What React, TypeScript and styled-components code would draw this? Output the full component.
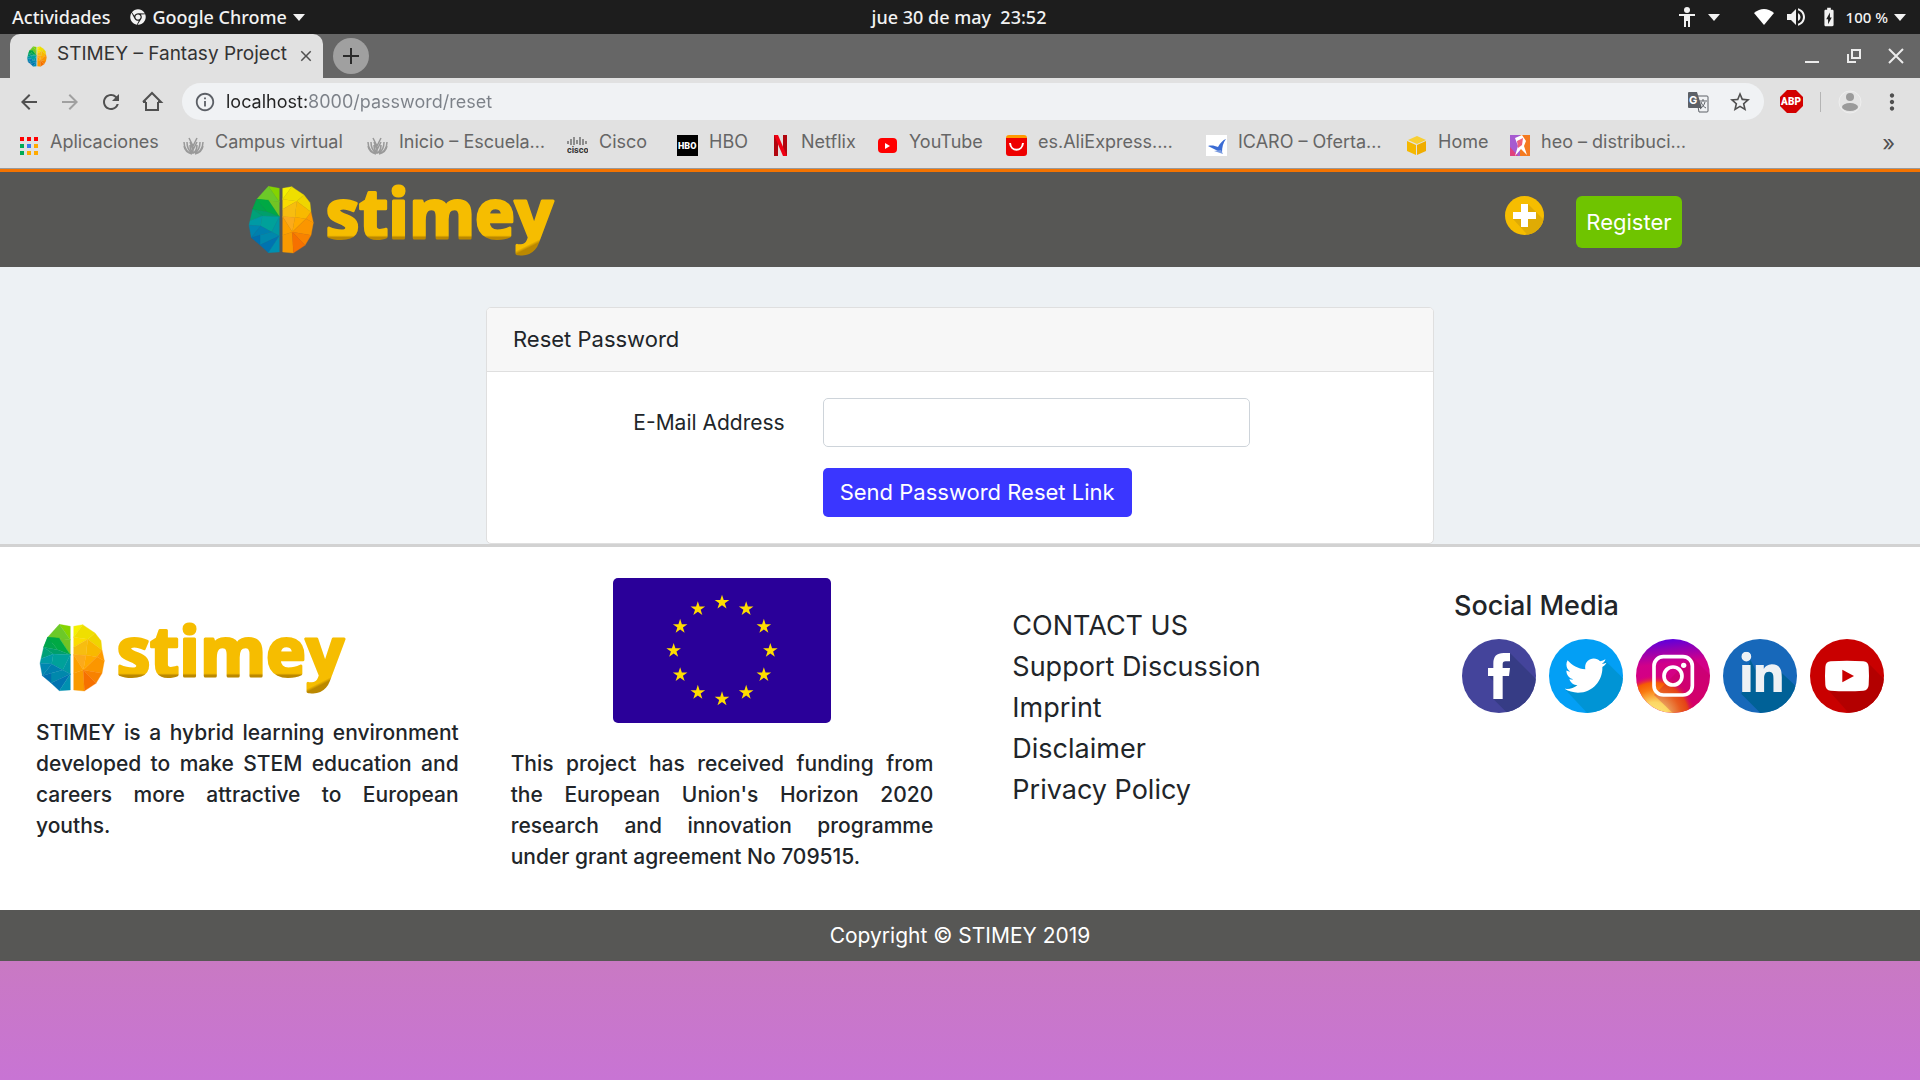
import React from "react";
import styled, { createGlobalStyle } from "styled-components";
import {
  MdArrowBack,
  MdArrowForward,
  MdRefresh,
  MdInfoOutline,
  MdStarBorder,
  MdMoreVert,
  MdVolumeUp,
  MdBatteryChargingFull,
  MdClose,
} from "react-icons/md";
import { FaChrome, FaTwitter, FaLinkedinIn } from "react-icons/fa";

const GlobalStyle = createGlobalStyle`
  *, *::before, *::after { box-sizing: border-box; }
  body {
    margin: 0;
    background: #c874d4;
    color: #212529;
    font-family: Inter, "Open Sans", sans-serif;
    font-size: 22px;
    line-height: 31px;
  }
  a { color: inherit; text-decoration: none; }
  button, input { font: inherit; }
  button { cursor: pointer; }
  svg { display: block; flex: none; }
`;

const Screen = styled.div`
  display: flex;
  flex-direction: column;
  min-height: 100vh;
`;

/* ---------- Desktop bar ---------- */

const DesktopBar = styled.div`
  display: grid;
  grid-template-columns: 1fr auto 1fr;
  align-items: center;
  height: 34px;
  padding: 0 14px 0 12px;
  background: #1d1d1d;
  color: #f2f2f2;
  font: 500 18px/24px "Noto Sans", sans-serif;
`;

const DesktopGroup = styled.div<{ $end?: boolean }>`
  display: flex;
  align-items: center;
  justify-content: ${(p) => (p.$end ? "flex-end" : "flex-start")};
  gap: ${(p) => (p.$end ? "10px" : "20px")};
`;

const DesktopButton = styled.button`
  display: flex;
  align-items: center;
  gap: 6px;
  padding: 0;
  border: 0;
  background: none;
  color: inherit;
`;

const Clock = styled.time`
  white-space: pre;
`;

const Battery = styled.span`
  font-size: 15px;
`;

const Caret = styled.span`
  border: 6px solid transparent;
  border-top: 7px solid currentColor;
  border-bottom: 0;
`;

const AccessGroup = styled(DesktopButton)`
  gap: 12px;
  margin-right: 24px;
`;

/* ---------- Browser window ---------- */

const TabStrip = styled.div`
  display: flex;
  align-items: center;
  height: 44px;
  padding: 0 16px 0 10px;
  background: #666;
`;

const Tab = styled.div`
  display: flex;
  align-items: center;
  align-self: stretch;
  gap: 10px;
  width: 313px;
  padding: 0 12px 0 17px;
  border-radius: 10px 10px 0 0;
  background: #e1e1e1;
`;

const TabTitle = styled.span`
  flex: 1;
  padding-bottom: 4px;
  color: #333;
  font: 19px/24px Inter, sans-serif;
  white-space: nowrap;
`;

const IconButton = styled.button<{ $muted?: boolean }>`
  display: grid;
  place-items: center;
  padding: 0;
  border: 0;
  background: none;
  color: ${(p) => (p.$muted ? "#a0a0a0" : "#505050")};
`;

const NewTab = styled(IconButton)`
  width: 36px;
  height: 36px;
  margin-left: 10px;
  border-radius: 50%;
  background: #a0a0a0;
  color: #2a2a2a;
`;

const WindowControls = styled.div`
  display: flex;
  gap: 26px;
  margin-left: auto;
  button { color: #ececec; }
`;

const Toolbar = styled.div`
  display: flex;
  align-items: center;
  height: 47px;
  padding: 0 15px 0 17px;
  background: #e1e1e1;
`;

const NavButtons = styled.div`
  display: flex;
  gap: 17px;
  margin-right: 18px;
`;

const Omnibox = styled.label`
  display: flex;
  flex: 1;
  align-items: center;
  gap: 10px;
  height: 37px;
  padding: 0 12px;
  border-radius: 19px;
  background: #f0f2f4;
  color: #5c6066;
`;

const UrlInput = styled.input`
  flex: 1;
  min-width: 0;
  padding: 0;
  border: 0;
  outline: 0;
  background: linear-gradient(to right, #222 82px, #7c8188 82px);
  background-clip: text;
  -webkit-text-fill-color: transparent;
  color: #5c6066;
  font: 18px/24px Inter, sans-serif;
`;

const OmniActions = styled.div`
  display: flex;
  gap: 18px;
`;

const ToolbarActions = styled.div`
  display: flex;
  align-items: center;
  gap: 17px;
  margin-left: 16px;
`;

const Divider = styled.span`
  width: 1px;
  height: 20px;
  background: #b4b4b4;
`;

const Bookmarks = styled.nav`
  display: flex;
  align-items: center;
  height: 44px;
  padding: 0 25px 10px 18px;
  border-bottom: 1px solid #999;
  background: #e1e1e1;
`;

const Bookmark = styled.a<{ $width: number }>`
  display: flex;
  align-items: center;
  gap: 11px;
  width: ${(p) => p.$width}px;
  color: #666;
  font: 18px/24px Inter, sans-serif;
  white-space: nowrap;
  svg { margin-top: 7px; }
`;

const More = styled(IconButton)`
  margin-left: auto;
  padding-top: 4px;
`;

/* ---------- Site ---------- */

const SiteHeader = styled.header`
  border-top: 3px solid #f47300;
  background: #575755;
`;

const HeaderInner = styled.div`
  display: flex;
  align-items: center;
  justify-content: space-between;
  max-width: 1443px;
  height: 95px;
  margin: 0 auto;
  padding-left: 10px;
`;

const HeaderActions = styled.div`
  display: flex;
  align-items: flex-start;
  align-self: stretch;
  gap: 32px;
  padding-top: 24px;
`;

const Register = styled.a`
  padding: 10px;
  border-radius: 6px;
  background: #6fc400;
  color: #fff;
  line-height: 32px;
`;

const Main = styled.main`
  padding-top: 40px;
  background: #edf1f4;
`;

const Card = styled.section`
  max-width: 948px;
  margin: 0 auto;
  overflow: hidden;
  border: 1px solid #dfdfdf;
  border-radius: 5px;
  background: #fff;
`;

const CardTitle = styled.h1`
  margin: 0;
  padding: 16px 26px;
  border-bottom: 1px solid #dfdfdf;
  background: #f7f7f7;
  font-size: 22px;
  font-weight: 400;
  line-height: 31px;
`;

const ResetForm = styled.form`
  display: grid;
  grid-template-columns: 272fr 428fr 119fr;
  gap: 21px 38px;
  align-items: center;
  padding: 26px;
`;

const FieldLabel = styled.label`
  font-size: 21px;
  text-align: right;
`;

const EmailInput = styled.input`
  width: 100%;
  height: 49px;
  padding: 8px 15px;
  border: 1px solid #ced4da;
  border-radius: 5px;
  background: #fff;
`;

const SubmitButton = styled.button`
  grid-column: 2;
  justify-self: start;
  height: 49px;
  padding: 0 17px;
  border: 0;
  border-radius: 5px;
  background: #3a36ff;
  color: #fff;
`;

const Footer = styled.footer`
  display: grid;
  grid-template-columns: 423fr 423fr 417fr 429fr;
  gap: 52px;
  padding: 31px 36px 38px;
  border-top: 3px solid #d2d2d2;
  background: #fff;
`;

const Column = styled.div<{ $top: number; $left?: number }>`
  padding-top: ${(p) => p.$top}px;
  padding-left: ${(p) => p.$left ?? 0}px;
`;

const LogoLink = styled.a`
  display: block;
  padding-left: 4px;
`;

const Blurb = styled.p`
  margin: 25px 0 0;
  font-size: 21px;
  font-weight: 500;
  line-height: 31px;
  text-align: justify;
`;

const FlagBox = styled.div`
  display: flex;
  justify-content: center;
`;

const Links = styled.ul`
  margin: 0;
  padding: 0;
  list-style: none;
  font-size: 27px;
  line-height: 41px;
`;

const SocialTitle = styled.h2`
  margin: 0 0 17px;
  font-size: 27px;
  font-weight: 500;
  line-height: 32px;
`;

const SocialRow = styled.div`
  display: flex;
  gap: 13px;
  padding-left: 8px;
`;

const Copyright = styled.div`
  padding: 10px;
  background: #575755;
  color: #fff;
  font-size: 21px;
  text-align: center;
`;

const Backdrop = styled.div`
  flex: 1;
  background: linear-gradient(#c979c3, #c874d4);
`;

/* ---------- Drawings ---------- */

const facets: [string, string][] = [
  ["115,61 148,67 148,108", "#84d400"],
  ["115,61 148,108 80,100", "#6cc928"],
  ["80,100 115,103 68,130", "#00a63c"],
  ["115,103 148,108 148,152", "#72c424"],
  ["80,100 115,103 148,152 110,137", "#00a944"],
  ["80,100 110,137 68,130", "#00a54c"],
  ["68,130 110,137 148,152 97,150", "#009f6b"],
  ["68,130 97,150 60,164", "#00a078"],
  ["60,164 97,150 92,180 57,178", "#009aa5"],
  ["97,150 148,152 125,198 92,180", "#00a19a"],
  ["148,152 148,210 125,198", "#0097a2"],
  ["57,178 92,180 64,215", "#0086b0"],
  ["92,180 125,198 90,208 64,215", "#007fae"],
  ["125,198 148,210 90,237 90,208", "#0088ac"],
  ["64,215 90,208 90,237", "#006fae"],
  ["90,237 148,210 115,260", "#0073b0"],
  ["148,210 148,258 115,260", "#0090b0"],
  ["158,67 185,62 158,100", "#f5f100"],
  ["185,62 222,87 200,106 158,100", "#efdf00"],
  ["222,87 240,110 243,138 200,106", "#efd500"],
  ["158,100 200,106 158,130", "#fbdc00"],
  ["200,106 243,138 228,158 195,154", "#f8b900"],
  ["158,130 200,106 195,154 158,152", "#f7bd10"],
  ["158,152 195,154 187,198", "#fbaa1c"],
  ["195,154 228,158 187,198", "#ffaa00"],
  ["228,158 243,138 250,170", "#ff9a00"],
  ["228,158 250,170 243,208 187,198", "#fb9600"],
  ["158,152 187,198 158,208", "#fca000"],
  ["187,198 243,208 225,238", "#f88200"],
  ["158,208 187,198 190,261 158,258", "#f99a00"],
  ["187,198 225,238 190,261", "#f67000"],
];

const Facets = () => (
  <>
    {facets.map(([points, fill]) => (
      <polygon key={points} points={points} fill={fill} stroke={fill} strokeWidth="1" />
    ))}
  </>
);

const Brain = () => (
  <svg width="20" height="21" viewBox="54 58 200 206" aria-hidden="true">
    <Facets />
  </svg>
);

const Wordmark = styled.svg`
  overflow: visible;
`;

const Logo = ({ id }: { id: string }) => (
  <Wordmark width="306" height="68" viewBox="57 60 918 204" role="img" aria-label="stimey">
    <defs>
      <linearGradient id={`${id}-a`} gradientUnits="userSpaceOnUse" x1="0" y1="208" x2="0" y2="214">
        <stop offset="0" stopColor="#f6bd00" />
        <stop offset="1" stopColor="#bb8800" />
      </linearGradient>
      <linearGradient id={`${id}-b`} gradientUnits="userSpaceOnUse" x1="895" y1="236" x2="899" y2="244">
        <stop offset="0" stopColor="#f6bd00" />
        <stop offset="1" stopColor="#bb8800" />
      </linearGradient>
    </defs>
    <Facets />
    <text
      x="287"
      y="216"
      fontFamily="'Open Sans', sans-serif"
      fontWeight="700"
      fontSize="202"
      strokeWidth="9"
      strokeLinejoin="round"
    >
      <tspan fill={`url(#${id}-a)`} stroke={`url(#${id}-a)`}>stime</tspan>
      <tspan fill={`url(#${id}-b)`} stroke={`url(#${id}-b)`}>y</tspan>
    </text>
  </Wordmark>
);

const PlusBadge = () => (
  <svg width="39" height="39" viewBox="0 0 117 117" aria-hidden="true">
    <clipPath id="plus-clip"><circle cx="58.500" cy="58.500" r="58.500" /></clipPath>
    <g clipPath="url(#plus-clip)">
      <rect width="117" height="117" fill="#f6bd00" />
      <path d="M69 24L130 85V130H80L24 69Z" fill="#dfab05" />
    </g>
    <path d="M48 24h21v24h24v21H69v24H48V69H24V48h24z" fill="#fff" />
  </svg>
);

const starPoints = (cx: number, cy: number, r: number) =>
  Array.from({ length: 10 }, (_, i) => {
    const a = (Math.PI / 5) * i - Math.PI / 2;
    const d = i % 2 ? r * 0.382 : r;
    return `${(cx + d * Math.cos(a)).toFixed(1)},${(cy + d * Math.sin(a)).toFixed(1)}`;
  }).join(" ");

const EuFlag = () => (
  <svg width="218" height="145" viewBox="0 0 654 435" role="img" aria-label="European Union">
    <rect width="654" height="435" rx="15" fill="#2a0099" />
    {Array.from({ length: 12 }, (_, i) => {
      const a = (Math.PI / 6) * i;
      return (
        <polygon key={i} points={starPoints(327 + 145 * Math.sin(a), 218 - 145 * Math.cos(a), 23)} fill="#fd0" />
      );
    })}
  </svg>
);

type DiscProps = { id: string; bg: string; shade?: string; shadow: string; children: React.ReactNode };

const Disc = ({ id, bg, shade, shadow, children }: DiscProps) => (
  <svg width="74" height="74" viewBox="0 0 222 222" aria-hidden="true">
    <clipPath id={id}><circle cx="111" cy="111" r="111" /></clipPath>
    <g clipPath={`url(#${id})`}>
      <rect width="222" height="222" fill={bg} />
      <path d={shadow} fill={shade} />
    </g>
    {children}
  </svg>
);

const Facebook = () => (
  <Disc id="fb" bg="#44449b" shade="#363c85" shadow="M144 42L260 158V260H174L94 180V126L78 110Z">
    <path
      fill="#fff"
      d="M94 180V111H78V87H94V74C94 52 104 42 125 42H144V67H131C124 67 122 70 122 76V87H144L141 111H122V180Z"
    />
  </Disc>
);

const Twitter = () => (
  <Disc id="tw" bg="#039ff5" shade="#0094d5" shadow="M170 66L260 156V260H150L50 153Z">
    <FaTwitter x={47} y={47} size={126} color="#fff" />
  </Disc>
);

const Instagram = () => (
  <svg width="74" height="74" viewBox="0 0 222 222" aria-hidden="true">
    <defs>
      <linearGradient id="ig-base" x1="0.400" y1="0" x2="0.500" y2="1">
        <stop offset="0" stopColor="#5b00df" />
        <stop offset="0.140" stopColor="#9100b5" />
        <stop offset="0.330" stopColor="#d1008a" />
        <stop offset="1" stopColor="#e0006f" />
      </linearGradient>
      <radialGradient id="ig-glow" cx="0.250" cy="1.050" r="0.560">
        <stop offset="0" stopColor="#ffe87a" />
        <stop offset="0.350" stopColor="#fcd765" />
        <stop offset="0.650" stopColor="#fa7a10" />
        <stop offset="0.820" stopColor="#f55a05" />
        <stop offset="1" stopColor="#e0006f" stopOpacity="0" />
      </radialGradient>
      <clipPath id="ig"><circle cx="111" cy="111" r="111" /></clipPath>
    </defs>
    <g clipPath="url(#ig)">
      <rect width="222" height="222" fill="url(#ig-base)" />
      <rect width="222" height="222" fill="url(#ig-glow)" />
      <path d="M168 54L260 146V260H150L54 168Z" fill="#b4004a" opacity="0.250" />
    </g>
    <g fill="none" stroke="#fff">
      <rect x="54" y="53" width="115" height="115" rx="28" strokeWidth="11" />
      <circle cx="111" cy="111" r="27" strokeWidth="11" />
    </g>
    <circle cx="143" cy="79" r="8" fill="#fff" />
  </svg>
);

const LinkedIn = () => (
  <Disc id="li" bg="#1768ba" shade="#006197" shadow="M82 62L97 92H166L260 180V260H150L55 165Z">
    <FaLinkedinIn x={47} y={38} size={138} color="#eef1f4" />
  </Disc>
);

const YouTube = () => (
  <Disc id="yt" bg="#c90000" shade="#b30000" shadow="M172 70L260 158V260H150L52 150Z">
    <path
      fill="#fff"
      d="M62 67Q111 64 160 67Q175 68 176 84Q178 111 176 138Q175 154 160 155Q111 158 62 155Q47 154 46 138Q44 111 46 84Q47 68 62 67Z"
    />
    <path d="M97 92L132 111L97 130Z" fill="#c90000" />
  </Disc>
);

const AppsIcon = () => {
  const colors = ["#f00", "#f00", "#f00", "#0a5", "#3b78f0", "#fa0", "#0a5", "#fa0", "#fa0"];
  return (
    <svg width="21" height="21" viewBox="0 0 21 21" aria-hidden="true">
      {colors.map((c, i) => (
        <rect key={i} x={2 + (i % 3) * 7} y={2 + Math.floor(i / 3) * 7} width="4" height="4" fill={c} />
      ))}
    </svg>
  );
};

const LotusIcon = () => (
  <svg width="21" height="21" viewBox="0 0 21 21" fill="none" stroke="#999" strokeWidth="1.500" aria-hidden="true">
    <path d="M6 3l4 8 4-8M7 7l3 8 4-8M1 7c0 7 4 11 8 12M20 7c0 7-4 11-8 12M1 11c1 5 4 7 8 8M20 11c-1 5-4 7-8 8M4 7c0 5 2 9 5 11M17 7c0 5-2 9-5 11M7 10c0 4 1 6 3 8M14 10c0 4-1 6-3 8M10 12v7" />
  </svg>
);

const CiscoIcon = () => (
  <svg width="21" height="21" viewBox="0 0 21 21" aria-hidden="true">
    <path
      d="M1 6v3M4 4v6M7 2v8M10 5v4M13 2v8M16 4v6M19 6v3"
      stroke="#555"
      strokeWidth="1.200"
    />
    <text x="0" y="18" fontFamily="Roboto, sans-serif" fontSize="9" fontWeight="700" fill="#333">cisco</text>
  </svg>
);

const HboIcon = () => (
  <svg width="21" height="21" viewBox="0 0 21 21" aria-hidden="true">
    <rect width="21" height="21" fill="#000" />
    <text x="1" y="14" fontFamily="Roboto, sans-serif" fontSize="9" fontWeight="900" fill="#fff">HBO</text>
  </svg>
);

const NetflixIcon = () => (
  <svg width="19" height="21" viewBox="0 0 19 21" aria-hidden="true">
    <path d="M3 0h4v21H3zM12 0h4v21h-4z" fill="#b1060f" />
    <path d="M3 0h4l9 21h-4z" fill="#f00012" />
  </svg>
);

const YtIcon = () => (
  <svg width="21" height="21" viewBox="0 0 21 21" aria-hidden="true">
    <rect x="1" y="3" width="19" height="15" rx="4" fill="#f00" />
    <path d="M8 8l5 3-5 3z" fill="#fff" />
  </svg>
);

const AliIcon = () => (
  <svg width="21" height="21" viewBox="0 0 21 21" aria-hidden="true">
    <path d="M3 0h15a3 3 0 0 1 3 3v3H0V3a3 3 0 0 1 3-3z" fill="#ff9a00" />
    <path d="M0 3h21v15a3 3 0 0 1-3 3H3a3 3 0 0 1-3-3z" fill="#ee0000" />
    <path d="M4 8c1 9 12 9 13 0" fill="none" stroke="#fff" strokeWidth="2" />
  </svg>
);

const IcaroIcon = () => (
  <svg width="21" height="21" viewBox="0 0 21 21" aria-hidden="true">
    <rect width="21" height="21" fill="#fff" />
    <path d="M20 4c-3 4-4 8-4 14l-6-3-8-4c4-1 7 0 10 1 2-4 5-7 8-8z" fill="#3b6cd4" />
    <path d="M8 16l7-1 2 4z" fill="#7a9be0" />
  </svg>
);

const CubeIcon = () => (
  <svg width="21" height="21" viewBox="0 0 21 21" aria-hidden="true">
    <path d="M11 1l9 4-9 4-9-4z" fill="#f8cf33" />
    <path d="M1 6l9 4v10l-9-4z" fill="#f5b800" />
    <path d="M20 6l-9 4v10l9-4z" fill="#f0ad00" />
  </svg>
);

const HeoIcon = () => (
  <svg width="20" height="21" viewBox="0 0 20 21" aria-hidden="true">
    <path d="M0 0h10v21H0z" fill="#a65bd0" />
    <path d="M10 0h10v21H10z" fill="#f47a20" />
    <path d="M0 12l8 9H0z" fill="#e0407c" />
    <path d="M5 3l7-3 4 6-2 5 3 9-6-6-6 7 3-10z" fill="#fff" />
    <path d="M7 6l6-3-1 7-4 3z" fill="#ef5f7a" />
  </svg>
);

const HomeIcon = () => (
  <svg width="24" height="24" viewBox="0 0 24 24" fill="none" stroke="currentColor" strokeWidth="2" aria-hidden="true">
    <path d="M6 12v8h12v-8M3 12l9-9 9 9h-3M3 12h3" />
  </svg>
);

const TranslateIcon = () => (
  <svg width="24" height="24" viewBox="0 0 24 24" aria-hidden="true">
    <path d="M10 6h11a1 1 0 0 1 1 1v14a1 1 0 0 1-1 1h-8z" fill="#f0f2f4" stroke="#5c6066" />
    <path d="M3 2h8l5 16H3a1 1 0 0 1-1-1V3a1 1 0 0 1 1-1z" fill="#5c6066" />
    <text x="3" y="14" fontFamily="Inter, sans-serif" fontSize="11" fontWeight="700" fill="#fff">G</text>
    <path d="M13 11h8M17 9v2M15 12c1 3 3 5 5 6M19 12c-1 3-2 5-5 7" fill="none" stroke="#5c6066" />
  </svg>
);

const AbpIcon = () => (
  <svg width="23" height="23" viewBox="0 0 23 23" aria-hidden="true">
    <path d="M7 0h9l7 7v9l-7 7H7l-7-7V7z" fill="#d30000" />
    <text x="11" y="15" textAnchor="middle" fontFamily="Roboto, sans-serif" fontSize="10" fontWeight="900" fill="#fff">ABP</text>
  </svg>
);

const AvatarIcon = () => (
  <svg width="24" height="24" viewBox="0 0 24 24" aria-hidden="true">
    <circle cx="12" cy="12" r="11" fill="#e4e4e4" stroke="#efefef" />
    <circle cx="12" cy="7" r="4" fill="#9b9b9b" />
    <ellipse cx="12" cy="17" rx="8" ry="4" fill="#9b9b9b" />
  </svg>
);

const PersonIcon = () => (
  <svg width="18" height="22" viewBox="0 0 18 22" fill="#f2f2f2" aria-hidden="true">
    <circle cx="9" cy="4" r="3" />
    <path d="M1 8h16v2h-5v11h-2v-6H8v6H6V10H1z" />
  </svg>
);

const WifiIcon = () => (
  <svg width="20" height="16" viewBox="0 0 20 16" fill="#fff" aria-hidden="true">
    <path d="M0 4Q10-4 20 4L10 16z" />
  </svg>
);

const bookmarks: { label: string; width: number; icon: React.ReactNode }[] = [
  { label: "Aplicaciones", width: 165, icon: <AppsIcon /> },
  { label: "Campus virtual", width: 184, icon: <LotusIcon /> },
  { label: "Inicio – Escuela…", width: 200, icon: <LotusIcon /> },
  { label: "Cisco", width: 110, icon: <CiscoIcon /> },
  { label: "HBO", width: 94, icon: <HboIcon /> },
  { label: "Netflix", width: 106, icon: <NetflixIcon /> },
  { label: "YouTube", width: 129, icon: <YtIcon /> },
  { label: "es.AliExpress.…", width: 200, icon: <AliIcon /> },
  { label: "ICARO – Oferta…", width: 200, icon: <IcaroIcon /> },
  { label: "Home", width: 104, icon: <CubeIcon /> },
  { label: "heo – distribuci…", width: 180, icon: <HeoIcon /> },
];

const footerLinks = ["CONTACT US", "Support Discussion", "Imprint", "Disclaimer", "Privacy Policy"];

const socials: { label: string; icon: React.ReactNode }[] = [
  { label: "Facebook", icon: <Facebook /> },
  { label: "Twitter", icon: <Twitter /> },
  { label: "Instagram", icon: <Instagram /> },
  { label: "LinkedIn", icon: <LinkedIn /> },
  { label: "YouTube", icon: <YouTube /> },
];

export default function App() {
  return (
    <Screen>
      <GlobalStyle />
      <DesktopBar>
        <DesktopGroup>
          <DesktopButton>Actividades</DesktopButton>
          <DesktopButton><FaChrome size={16} />Google Chrome<Caret /></DesktopButton>
        </DesktopGroup>
        <Clock>jue 30 de may  23:52</Clock>
        <DesktopGroup $end>
          <AccessGroup aria-label="Accesibilidad"><PersonIcon /><Caret /></AccessGroup>
          <WifiIcon />
          <MdVolumeUp size={24} />
          <DesktopButton><MdBatteryChargingFull size={22} /><Battery>100 %</Battery><Caret /></DesktopButton>
        </DesktopGroup>
      </DesktopBar>

      <TabStrip>
        <Tab>
          <Brain />
          <TabTitle>STIMEY – Fantasy Project</TabTitle>
          <IconButton aria-label="Cerrar pestaña"><MdClose size={18} /></IconButton>
        </Tab>
        <NewTab aria-label="Nueva pestaña">
          <svg width="18" height="18" viewBox="0 0 18 18" stroke="currentColor" strokeWidth="2">
            <path d="M9 1v16M1 9h16" />
          </svg>
        </NewTab>
        <WindowControls>
          <IconButton aria-label="Minimizar">
            <svg width="16" height="16" viewBox="0 0 16 16"><path d="M1 14h14" stroke="currentColor" strokeWidth="2" /></svg>
          </IconButton>
          <IconButton aria-label="Restaurar">
            <svg width="16" height="16" viewBox="0 0 16 16" fill="none" stroke="currentColor" strokeWidth="2">
              <path d="M6 2h8v8H6zM2 6v8h8" />
            </svg>
          </IconButton>
          <IconButton aria-label="Cerrar">
            <svg width="16" height="16" viewBox="0 0 16 16" stroke="currentColor" strokeWidth="2"><path d="M1 1l14 14M15 1L1 15" /></svg>
          </IconButton>
        </WindowControls>
      </TabStrip>

      <Toolbar>
        <NavButtons>
          <IconButton aria-label="Atrás"><MdArrowBack size={24} /></IconButton>
          <IconButton aria-label="Adelante" $muted><MdArrowForward size={24} /></IconButton>
          <IconButton aria-label="Recargar"><MdRefresh size={24} /></IconButton>
          <IconButton aria-label="Inicio"><HomeIcon /></IconButton>
        </NavButtons>
        <Omnibox>
          <MdInfoOutline size={22} />
          <UrlInput type="text" aria-label="Dirección" defaultValue="localhost:8000/password/reset" />
          <OmniActions>
            <IconButton aria-label="Traducir"><TranslateIcon /></IconButton>
            <IconButton aria-label="Favorito"><MdStarBorder size={24} /></IconButton>
          </OmniActions>
        </Omnibox>
        <ToolbarActions>
          <IconButton aria-label="Adblock Plus"><AbpIcon /></IconButton>
          <Divider />
          <IconButton aria-label="Perfil"><AvatarIcon /></IconButton>
          <IconButton aria-label="Menú"><MdMoreVert size={26} /></IconButton>
        </ToolbarActions>
      </Toolbar>

      <Bookmarks>
        {bookmarks.map((b) => (
          <Bookmark key={b.label} href="#" $width={b.width}>{b.icon}{b.label}</Bookmark>
        ))}
        <More aria-label="Más marcadores">»</More>
      </Bookmarks>

      <SiteHeader>
        <HeaderInner>
          <a href="#"><Logo id="head" /></a>
          <HeaderActions>
            <a href="#" aria-label="Add"><PlusBadge /></a>
            <Register href="#">Register</Register>
          </HeaderActions>
        </HeaderInner>
      </SiteHeader>

      <Main>
        <Card>
          <CardTitle>Reset Password</CardTitle>
          <ResetForm>
            <FieldLabel htmlFor="email">E-Mail Address</FieldLabel>
            <EmailInput id="email" type="email" />
            <SubmitButton type="submit">Send Password Reset Link</SubmitButton>
          </ResetForm>
        </Card>
      </Main>

      <Footer>
        <Column $top={46}>
          <LogoLink href="#"><Logo id="foot" /></LogoLink>
          <Blurb>
            STIMEY is a hybrid learning environment developed to make STEM education and careers more attractive to
            European youths.
          </Blurb>
        </Column>
        <Column $top={0}>
          <FlagBox><EuFlag /></FlagBox>
          <Blurb>
            This project has received funding from the&nbsp;European Union's Horizon 2020 research&nbsp;and innovation
            programme under&nbsp;grant agreement No 709515.
          </Blurb>
        </Column>
        <Column $top={27} $left={27}>
          <Links>
            {footerLinks.map((l) => (
              <li key={l}><a href="#">{l}</a></li>
            ))}
          </Links>
        </Column>
        <Column $top={12}>
          <SocialTitle>Social Media</SocialTitle>
          <SocialRow>
            {socials.map((s) => (
              <a key={s.label} href="#" aria-label={s.label}>{s.icon}</a>
            ))}
          </SocialRow>
        </Column>
      </Footer>
      <Copyright>Copyright © STIMEY 2019</Copyright>
      <Backdrop />
    </Screen>
  );
}
